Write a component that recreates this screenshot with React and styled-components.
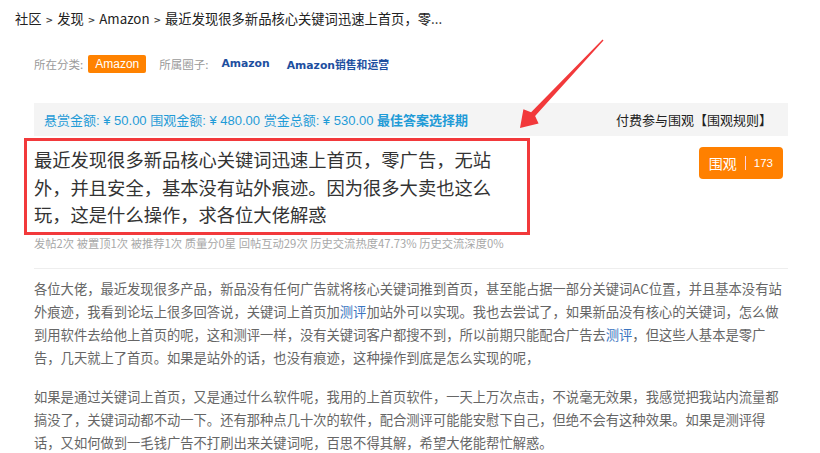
import React from 'react';
import styled, { createGlobalStyle } from 'styled-components';

const GlobalStyle = createGlobalStyle`
  html, body {
    margin: 0;
    padding: 0;
    background: #fff;
  }
  body {
    font-family: "Noto Sans CJK SC", "Noto Sans", sans-serif;
    color: #333;
  }
`;

const Page = styled.div`
  position: relative;
  width: 820px;
  height: 453px;
  overflow: hidden;
`;

const Crumbs = styled.nav`
  display: flex;
  align-items: center;
  padding: 9px 15px 0;
  height: 20px;
  font-size: 13.3px;
  line-height: 20px;
  color: #222;
`;

const CrumbSep = styled.span`
  margin: 0 4px;
  font-family: "DejaVu Sans", sans-serif;
  font-size: 9px;
  font-weight: bold;
  color: #444;
  transform: translateY(1px);
`;

const Column = styled.div`
  padding: 0 32px 0 34px;
`;

const MetaRow = styled.div`
  display: flex;
  align-items: center;
  height: 19px;
  margin-top: 25px;
  font-size: 11.5px;
`;

const MetaLabel = styled.span`
  color: #9a9a9a;
  margin-right: ${(p) => p.$gap || 5}px;
`;

const Badge = styled.span`
  display: inline-flex;
  align-items: center;
  height: 18px;
  padding: 0 7px;
  margin-right: 13px;
  border-radius: 2px;
  background: #ff8200;
  color: #fff;
  font-family: "Liberation Sans", "Noto Sans CJK SC", sans-serif;
  font-size: 12px;
`;

const CircleLink = styled.a`
  font-family: "DejaVu Sans", "Noto Sans CJK SC", sans-serif;
  font-weight: bold;
  font-size: 10.8px;
  color: #1d4f9f;
  text-decoration: none;
  margin-right: 17px;
`;

const RewardBar = styled.div`
  display: flex;
  justify-content: space-between;
  align-items: center;
  height: 33px;
  margin-top: 30px;
  padding: 0 16px 0 10px;
  background: #f4f4f4;
  font-family: "Liberation Sans", "Noto Sans CJK SC", sans-serif;
  font-size: 13px;
`;

const RewardInfo = styled.span`
  color: #1f9bd7;
  b {
    font-family: "Noto Sans CJK SC", sans-serif;
    font-weight: bold;
  }
`;

const JoinText = styled.span`
  color: #222;
`;

const TitleRow = styled.div`
  display: flex;
  justify-content: space-between;
  align-items: flex-start;
  margin-top: 2px;
`;

const TitleBox = styled.div`
  box-sizing: border-box;
  width: 506px;
  margin-left: -10px;
  padding: 5px 29px 3px 7px;
  border: 3px solid #f2393b;
`;

const Title = styled.h1`
  margin: 0;
  width: 464px;
  font-size: 18.3px;
  line-height: 27.5px;
  font-weight: normal;
  color: #333;
`;

const WatchButton = styled.button`
  display: flex;
  align-items: center;
  height: 32px;
  margin: 9px 5px 0 0;
  padding: 0 10px;
  border: none;
  border-radius: 4px;
  background: #ff8000;
  color: #fff;
  font-family: "Noto Sans CJK SC", sans-serif;
  font-size: 14px;
`;

const ButtonSep = styled.span`
  width: 1px;
  height: 14px;
  margin: 0 8px;
  background: #ffd0e0;
`;

const Count = styled.span`
  font-family: "Liberation Sans", sans-serif;
  font-size: 11.5px;
`;

const Stats = styled.div`
  font-size: 11.3px;
  line-height: 16px;
  color: #a8a8a8;
`;

const Divider = styled.hr`
  margin: 17px 0 0;
  border: none;
  border-top: 1px solid #eeeeee;
`;

const Body = styled.div`
  padding-top: 8px;
  width: 754px;
`;

const Para = styled.p`
  margin: 0 0 16px;
  font-size: 13.3px;
  line-height: 23px;
  color: #666;
`;

const Keyword = styled.span`
  color: #3a74c0;
`;

const Arrow = styled.svg`
  position: absolute;
  left: 0;
  top: 0;
  pointer-events: none;
`;

export default function App() {
  return (
    <Page>
      <GlobalStyle />
      <Crumbs>
        社区<CrumbSep>&gt;</CrumbSep>发现<CrumbSep>&gt;</CrumbSep>Amazon
        <CrumbSep>&gt;</CrumbSep>最近发现很多新品核心关键词迅速上首页，零...
      </Crumbs>
      <Column>
        <MetaRow>
          <MetaLabel>所在分类:</MetaLabel>
          <Badge>Amazon</Badge>
          <MetaLabel $gap={13}>所属圈子:</MetaLabel>
          <CircleLink>Amazon</CircleLink>
          <CircleLink>Amazon销售和运营</CircleLink>
        </MetaRow>
        <RewardBar>
          <RewardInfo>
            悬赏金额: ¥ 50.00 围观金额: ¥ 480.00 赏金总额: ¥ 530.00 <b>最佳答案选择期</b>
          </RewardInfo>
          <JoinText>付费参与围观【围观规则】</JoinText>
        </RewardBar>
        <TitleRow>
          <TitleBox>
            <Title>
              最近发现很多新品核心关键词迅速上首页，零广告，无站外，并且安全，基本没有站外痕迹。因为很多大卖也这么玩，这是什么操作，求各位大佬解惑
            </Title>
          </TitleBox>
          <WatchButton>
            围观<ButtonSep />
            <Count>173</Count>
          </WatchButton>
        </TitleRow>
        <Stats>
          发帖2次 被置顶1次 被推荐1次 质量分0星 回帖互动29次 历史交流热度47.73% 历史交流深度0%
        </Stats>
        <Divider />
        <Body>
          <Para>
            各位大佬，最近发现很多产品，新品没有任何广告就将核心关键词推到首页，甚至能占据一部分关键词AC位置，并且基本没有站外痕迹，我看到论坛上很多回答说，关键词上首页加<Keyword>测评</Keyword>加站外可以实现。我也去尝试了，如果新品没有核心的关键词，怎么做到用软件去给他上首页的呢，这和测评一样，没有关键词客户都搜不到，所以前期只能配合广告去<Keyword>测评</Keyword>，但这些人基本是零广告，几天就上了首页。如果是站外的话，也没有痕迹，这种操作到底是怎么实现的呢，
          </Para>
          <Para>
            如果是通过关键词上首页，又是通过什么软件呢，我用的上首页软件，一天上万次点击，不说毫无效果，我感觉把我站内流量都搞没了，关键词动都不动一下。还有那种点几十次的软件，配合测评可能能安慰下自己，但绝不会有这种效果。如果是测评得话，又如何做到一毛钱广告不打刷出来关键词呢，百思不得其解，希望大佬能帮忙解惑。
          </Para>
        </Body>
      </Column>
      <Arrow width="820" height="453" viewBox="0 0 820 453">
        <polygon
          points="603.5,40.5 535.1,116.1 538.6,123.6 520,128 523.4,109.2 531.1,112.3 602.5,39.5"
          fill="#f2393b"
        />
      </Arrow>
    </Page>
  );
}
